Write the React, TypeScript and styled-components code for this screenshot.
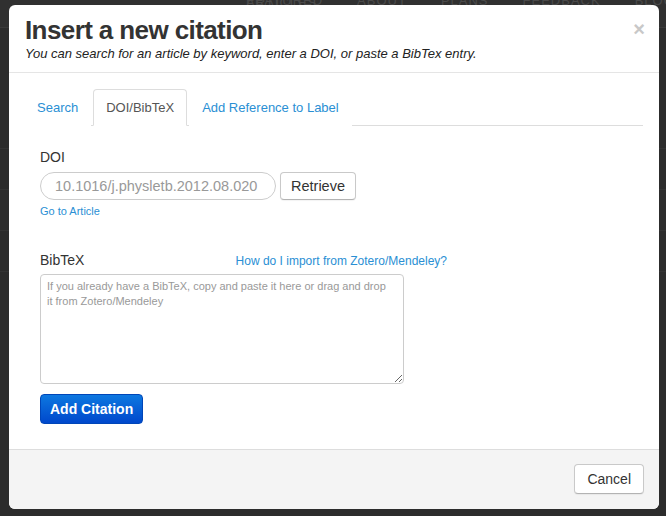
import React from "react";
import styled, { createGlobalStyle } from "styled-components";

const Global = createGlobalStyle`
  html, body { margin: 0; padding: 0; }
  body {
    width: 666px; height: 516px; overflow: hidden;
    background: #2c2c2c;
    font-family: "Liberation Sans", Arial, sans-serif;
  }
`;

const Backdrop = styled.div`
  position: relative;
  width: 666px;
  height: 516px;
  background: #2c2c2c;
  overflow: hidden;
`;

const BgNav = styled.div`
  height: 27px;
  border-bottom: 1px solid #3a3a3a;
  display: flex;
  gap: 34px;
  padding-left: 246px;
  align-items: flex-start;
  font-size: 13px;
  letter-spacing: 1px;
  color: #4a4a4a;
  line-height: 2px;
  background: #303030;
`;

const BgLines = styled.div`
  display: flex;
  flex-direction: column;
  padding-top: 80px;
`;

const BgRow = styled.div`
  height: 40px;
  border-bottom: 1px solid #343434;
`;

const Modal = styled.div`
  position: absolute;
  left: 9px;
  top: 5px;
  width: 650px;
  height: 504px;
  background: #fff;
  border-radius: 6px;
  display: flex;
  flex-direction: column;
  overflow: hidden;
`;

const Header = styled.div`
  position: relative;
  padding: 9px 16px 0 16px;
  height: 58px;
  border-bottom: 1px solid #e5e5e5;
`;

const Title = styled.h3`
  margin: 0;
  font-size: 26px;
  letter-spacing: -0.6px;
  font-weight: bold;
  line-height: 32px;
  color: #333;
`;

const Subtitle = styled.div`
  font-style: italic;
  font-size: 13px;
  line-height: 16px;
  color: #222;
`;

const Close = styled.div`
  position: absolute;
  right: 14px;
  top: 14px;
  font-size: 20px;
  font-weight: bold;
  color: #c8c8c8;
  line-height: 20px;
`;

const Body = styled.div`
  flex: 1;
  padding: 16px 16px 0 16px;
`;

const Tabs = styled.div`
  display: flex;
  border-bottom: 1px solid #ddd;
  height: 36px;
`;

const Tab = styled.div<{ $active?: boolean }>`
  padding: 0 12px;
  height: 37px;
  line-height: 36px;
  font-size: 13px;
  margin-right: 2px;
  color: ${(p) => (p.$active ? "#555" : "#2a8fd4")};
  background: #fff;
  border: 1px solid ${(p) => (p.$active ? "#ddd" : "transparent")};
  border-bottom-color: ${(p) => (p.$active ? "#fff" : "transparent")};
  border-radius: 4px 4px 0 0;
  margin-bottom: -1px;
  box-sizing: border-box;
  &:first-child { padding-left: 11px; }
`;

const Pane = styled.div`
  padding: 22px 15px 0 15px;
`;

const Label = styled.div`
  font-size: 14px;
  color: #333;
  line-height: 18px;
`;

const Row = styled.div`
  display: flex;
  gap: 4px;
  margin-top: 6px;
`;

const PillInput = styled.input`
  width: 236px;
  height: 28px;
  box-sizing: border-box;
  border: 1px solid #ccc;
  border-radius: 14px;
  padding: 0 10px 0 14px;
  font-family: inherit;
  font-size: 14.5px;
  color: #555;
  outline: none;
  &::placeholder { color: #999; }
`;

const Button = styled.button`
  height: 28px;
  box-sizing: border-box;
  padding: 0 10px;
  border: 1px solid #c9c9c9;
  border-bottom-color: #b3b3b3;
  border-radius: 4px;
  background: #fff;
  font-family: inherit;
  font-size: 14.5px;
  color: #333;
  box-shadow: 0 1px 1px rgba(0,0,0,0.05);
`;

const SmallLink = styled.a`
  display: block;
  font-size: 11px;
  color: #2a8fd4;
  line-height: 14px;
  margin-top: 4px;
  text-decoration: none;
`;

const BibHeader = styled.div`
  display: flex;
  justify-content: space-between;
  align-items: baseline;
  width: 407px;
  margin-top: 33px;
`;

const HelpLink = styled.a`
  font-size: 12px;
  color: #2a8fd4;
  text-decoration: none;
`;

const TextArea = styled.textarea`
  display: block;
  margin-top: 5px;
  width: 364px;
  height: 110px;
  box-sizing: border-box;
  border: 1px solid #ccc;
  border-radius: 4px;
  padding: 4px 12px 4px 6px;
  font-family: inherit;
  font-size: 11px;
  line-height: 15px;
  resize: both;
  outline: none;
  &::placeholder { color: #999; }
`;

const PrimaryButton = styled.button`
  margin-top: 10px;
  height: 30px;
  box-sizing: border-box;
  padding: 0 9px;
  border: 1px solid #0046b8;
  border-radius: 4px;
  background: linear-gradient(#0d78e0, #0048cc);
  font-family: inherit;
  font-size: 14px;
  font-weight: bold;
  color: #fff;
`;

const Footer = styled.div`
  height: 59px;
  border-top: 1px solid #ddd;
  background: #f4f4f4;
  display: flex;
  justify-content: flex-end;
  align-items: center;
  padding: 0 15px;
`;

const CancelButton = styled(Button)`
  height: 30px;
  font-size: 14px;
  padding: 0 12px;
  margin-top: -2px;
`;

export default function App() {
  return (
    <>
      <Global />
      <Backdrop>
        <BgNav>
          <span>FEATURED ARTICLES</span>
          <span>ABOUT</span>
          <span>PLANS</span>
          <span>FEEDBACK</span>
          <span>BLOG</span>
        </BgNav>
        <BgLines>
          <BgRow />
          <BgRow />
          <BgRow />
          <BgRow />
        </BgLines>
        <Modal>
          <Header>
            <Title>Insert a new citation</Title>
            <Subtitle>You can search for an article by keyword, enter a DOI, or paste a BibTex entry.</Subtitle>
            <Close>×</Close>
          </Header>
          <Body>
            <Tabs>
              <Tab>Search</Tab>
              <Tab $active>DOI/BibTeX</Tab>
              <Tab>Add Reference to Label</Tab>
            </Tabs>
            <Pane>
              <Label>DOI</Label>
              <Row>
                <PillInput placeholder="10.1016/j.physletb.2012.08.020" />
                <Button>Retrieve</Button>
              </Row>
              <SmallLink href="#">Go to Article</SmallLink>
              <BibHeader>
                <Label>BibTeX</Label>
                <HelpLink href="#">How do I import from Zotero/Mendeley?</HelpLink>
              </BibHeader>
              <TextArea placeholder="If you already have a BibTeX, copy and paste it here or drag and drop it from Zotero/Mendeley" />
              <PrimaryButton>Add Citation</PrimaryButton>
            </Pane>
          </Body>
          <Footer>
            <CancelButton>Cancel</CancelButton>
          </Footer>
        </Modal>
      </Backdrop>
    </>
  );
}
